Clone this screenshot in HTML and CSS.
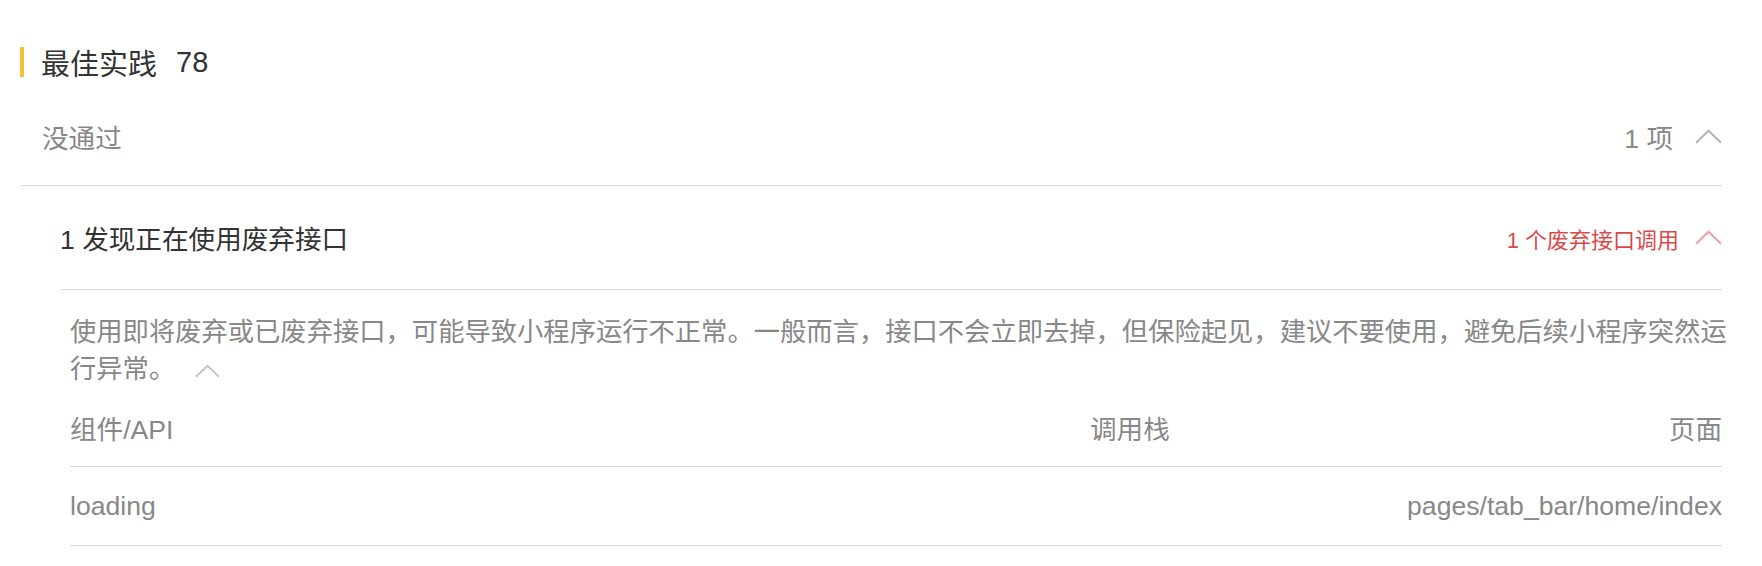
FILE: index.html
```html
<!DOCTYPE html>
<html lang="zh-CN">
<head>
    <meta charset="UTF-8">
    <meta name="viewport" content="width=device-width, initial-scale=1.0">
    <title>体验评分 - 最佳实践</title>
    <link rel="stylesheet" href="styles.css">
</head>
<body>
    <section class="audit">
        <h2 class="audit-title">最佳实践<span class="score">78</span></h2>

        <div class="group">
            <div class="group-head">
                <span>没通过</span>
                <span class="count">1 项
                    <svg class="arrow" viewBox="0 0 26 14"><polyline points="1,13 13,1.5 25,13"/></svg>
                </span>
            </div>

            <div class="issue">
                <div class="issue-head">
                    <span>1 发现正在使用废弃接口</span>
                    <span class="issue-count">1 个废弃接口调用
                        <svg class="arrow" viewBox="0 0 26 14"><polyline points="1,13 13,1.5 25,13"/></svg>
                    </span>
                </div>
                <div class="issue-body">
                    <p class="issue-desc">使用即将废弃或已废弃接口，可能导致小程序运行不正常。一般而言，接口不会立即去掉，但保险起见，建议不要使用，避免后续小程序突然运行异常。<svg class="arrow small" viewBox="0 0 26 14"><polyline points="1,13 13,1.5 25,13"/></svg></p>
                    <table>
                        <colgroup>
                            <col class="col-api">
                            <col class="col-stack">
                            <col>
                        </colgroup>
                        <thead>
                            <tr>
                                <th>组件/API</th>
                                <th>调用栈</th>
                                <th class="right">页面</th>
                            </tr>
                        </thead>
                        <tbody>
                            <tr>
                                <td>loading</td>
                                <td></td>
                                <td class="right">pages/tab_bar/home/index</td>
                            </tr>
                        </tbody>
                    </table>
                </div>
            </div>
        </div>
    </section>
</body>
</html>
```

FILE: styles.css
```css
body {
    margin: 0;
    padding: 37px 40px 0 20px;
    background-color: #fff;
    font-family: "Liberation Sans", "Noto Sans CJK SC", sans-serif;
    font-size: 26.6px;
    color: #888;
}
.audit-title {
    display: flex;
    align-items: center;
    height: 50px;
    margin: 0;
    font-size: 29px;
    font-weight: normal;
    color: #333;
}
.audit-title::before {
    content: '';
    width: 4px;
    height: 30px;
    margin-right: 17px;
    background-color: #f2c037;
}
.score {
    margin-left: 19px;
}
.group-head, .issue-head {
    display: flex;
    justify-content: space-between;
    align-items: center;
    border-bottom: 1px solid #ddd;
}
.group-head {
    height: 98px;
    padding-left: 22px;
}
.issue {
    margin-left: 40px;
}
.issue-head {
    height: 103px;
    color: #333;
}
.count, .issue-count {
    display: flex;
    align-items: center;
}
.count .arrow {
    margin-left: 22px;
}
.issue-count {
    font-size: 22px;
    color: #d94a4a;
}
.issue-count .arrow {
    margin-left: 16px;
    stroke: #eba3a4;
}
.arrow {
    width: 27px;
    height: 15px;
    fill: none;
    stroke: #b5b5b5;
    stroke-width: 2;
}
.arrow.small {
    width: 25px;
    height: 14px;
    margin-left: 20px;
    vertical-align: middle;
    stroke: #c4c4c4;
}
.issue-body {
    padding: 24px 0 0 10px;
}
.issue-desc {
    margin: 0 -14px 0 0;
    font-size: 26.3px;
    line-height: 37px;
}
table {
    width: 100%;
    border-collapse: collapse;
    table-layout: fixed;
}
.col-api {
    width: 1020px;
}
.col-stack {
    width: 300px;
}
th, td {
    padding: 0;
    text-align: left;
    font-weight: normal;
    border-bottom: 1px solid #ddd;
}
th {
    height: 78px;
}
td {
    height: 78px;
}
.right {
    text-align: right;
}
```
